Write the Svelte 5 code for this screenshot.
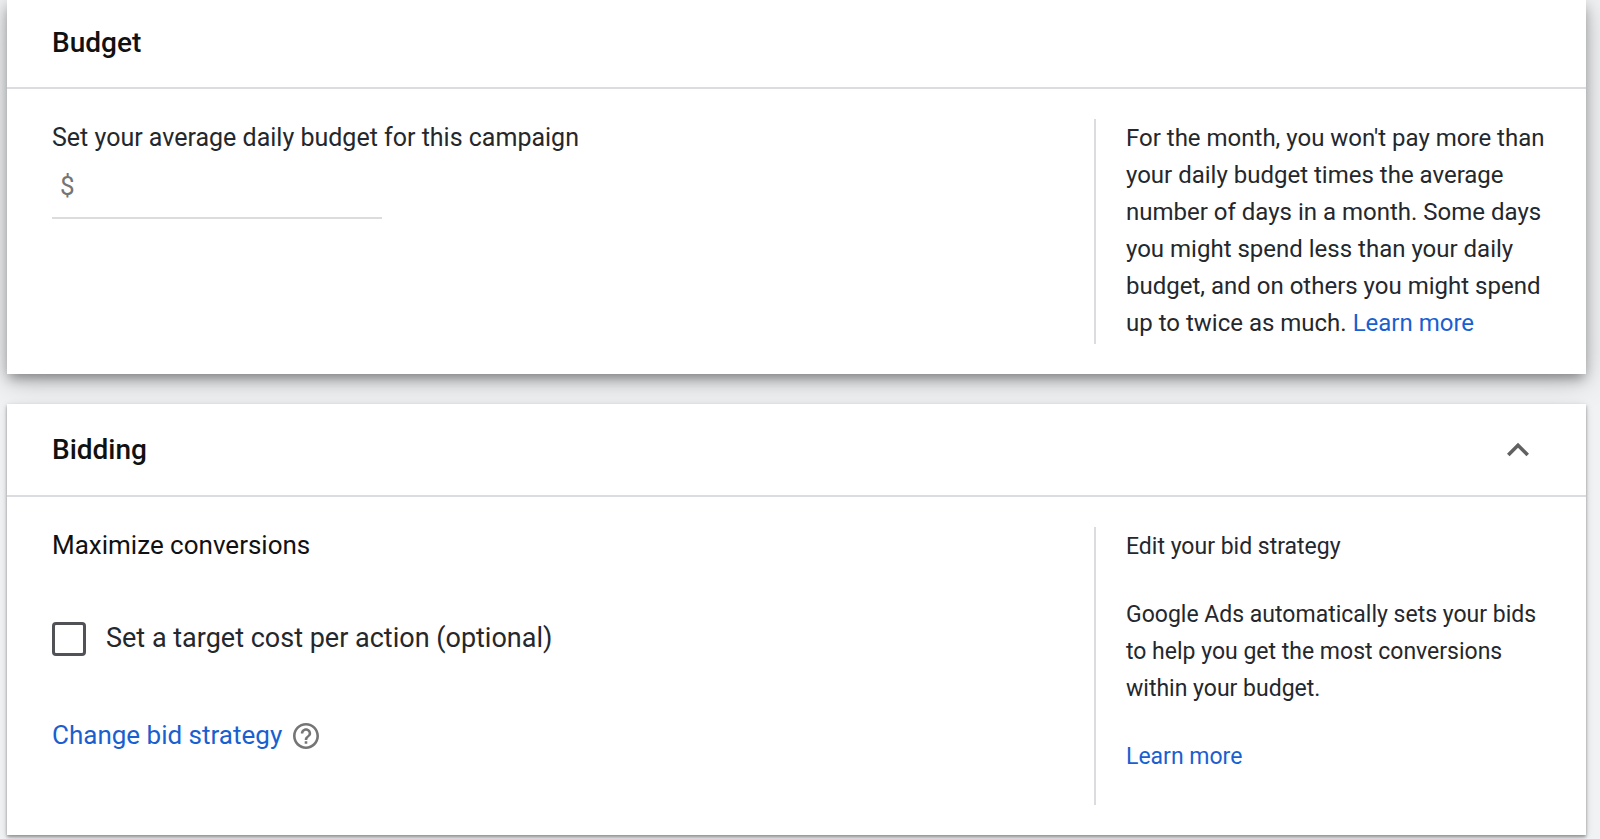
<script lang="ts">
  let budget = $state("");
  let targetCost = $state(false);
  let biddingOpen = $state(true);
</script>

<main>
  <section class="card raised">
    <header class="first">
      <h2>Budget</h2>
    </header>
    <div class="body">
      <div class="settings">
        <label class="budget-label" for="budget">
          Set your average daily budget for this campaign
        </label>
        <div class="money">
          <span>$</span>
          <input id="budget" type="text" inputmode="decimal" bind:value={budget} />
        </div>
      </div>
      <aside class="large">
        <p>
          For the month, you won't pay more than<br />
          your daily budget times the average<br />
          number of days in a month. Some days<br />
          you might spend less than your daily<br />
          budget, and on others you might spend<br />
          up to twice as much. <a href="#budget-help">Learn more</a>
        </p>
      </aside>
    </div>
  </section>

  <section class="card">
    <header>
      <h2>Bidding</h2>
      <button
        class="toggle"
        type="button"
        aria-label="Toggle bidding"
        aria-expanded={biddingOpen}
        onclick={() => (biddingOpen = !biddingOpen)}
      >
        <svg class:closed={!biddingOpen} viewBox="0 0 24 24" aria-hidden="true">
          <path d="M12 8l-6 6 1.41 1.41L12 10.83l4.59 4.58L18 14z" />
        </svg>
      </button>
    </header>
    {#if biddingOpen}
      <div class="body">
        <div class="settings">
          <h3>Maximize conversions</h3>
          <label class="check">
            <input type="checkbox" bind:checked={targetCost} />
            Set a target cost per action (optional)
          </label>
          <div class="change">
            <a href="#bid-strategy">Change bid strategy</a>
            <button class="help" type="button" aria-label="Help">
              <svg viewBox="2 2 20 20" aria-hidden="true">
                <path
                  d="M11 18h2v-2h-2v2zm1-16C6.48 2 2 6.48 2 12s4.48 10 10 10 10-4.48 10-10S17.52 2 12 2zm0 18c-4.41 0-8-3.59-8-8s3.59-8 8-8 8 3.59 8 8-3.59 8-8 8zm0-14c-2.21 0-4 1.79-4 4h2c0-1.1.9-2 2-2s2 .9 2 2c0 2-3 1.75-3 5h2c0-2.25 3-2.5 3-5 0-2.21-1.79-4-4-4z"
                />
              </svg>
            </button>
          </div>
        </div>
        <aside class="tall">
          <p>Edit your bid strategy</p>
          <p>
            Google Ads automatically sets your bids<br />
            to help you get the most conversions<br />
            within your budget.
          </p>
          <p><a href="#bidding-help">Learn more</a></p>
        </aside>
      </div>
    {/if}
  </section>
</main>

<style>
  :global(body) {
    margin: 0;
    background: #f1f2f4;
    color: #24282d;
    font-family: Roboto, Arial, sans-serif;
    line-height: 37px;
  }

  main {
    display: flex;
    flex-direction: column;
    gap: 30px;
    padding: 0 14px 4px 7px;
  }

  .card {
    background: #fff;
    box-shadow:
      0 2px 3px rgba(0, 0, 0, 0.35),
      0 2px 8px rgba(0, 0, 0, 0.14);
  }

  .raised {
    box-shadow:
      0 6px 12px -2px rgba(0, 0, 0, 0.4),
      0 6px 32px rgba(0, 0, 0, 0.2);
  }

  header {
    display: flex;
    align-items: center;
    justify-content: space-between;
    box-sizing: border-box;
    height: 93px;
    padding: 0 46px 0 45px;
    border-bottom: 2px solid #dadce0;
  }

  header.first {
    height: 89px;
    padding-bottom: 2px;
  }

  h2,
  h3,
  p {
    margin: 0;
  }

  h2 {
    color: #111;
    font-size: 28px;
    font-weight: 500;
  }

  h3 {
    color: #111;
    font-size: 26px;
    font-weight: 400;
  }

  a {
    color: #1a5fd0;
    text-decoration: none;
  }

  button {
    display: flex;
    padding: 0;
    border: 0;
    background: none;
    cursor: pointer;
  }

  .toggle svg {
    width: 44px;
    height: 44px;
    fill: #616161;
  }

  .toggle svg.closed {
    transform: rotate(180deg);
  }

  .body {
    display: flex;
    padding: 30px 30px 30px 45px;
  }

  .settings {
    flex: 1;
  }

  .budget-label {
    display: block;
    font-size: 25px;
  }

  .money {
    display: flex;
    align-items: center;
    gap: 8px;
    box-sizing: border-box;
    width: 330px;
    height: 63px;
    padding: 0 8px;
    border-bottom: 2px solid #dcdcdc;
    color: #757575;
    font-size: 26px;
  }

  .money input {
    flex: 1;
    min-width: 0;
    padding: 0;
    border: 0;
    outline: none;
    background: none;
    font: inherit;
  }

  .check {
    display: flex;
    align-items: center;
    gap: 20px;
    margin-top: 56px;
    font-size: 27px;
  }

  .check input {
    appearance: none;
    width: 34px;
    height: 34px;
    margin: 0;
    border: 3px solid #505257;
    border-radius: 4px;
  }

  .check input:checked {
    border-color: #1a5fd0;
    background: #1a5fd0;
  }

  .change {
    display: flex;
    align-items: center;
    gap: 11px;
    margin-top: 60px;
    font-size: 26px;
  }

  .help svg {
    width: 26px;
    height: 26px;
    fill: #757575;
  }

  aside {
    box-sizing: border-box;
    width: 462px;
    padding: 1px 0 2px 30px;
    border-left: 2px solid #dadce0;
    font-size: 23px;
  }

  aside.large {
    font-size: 24px;
  }

  aside.tall {
    padding-bottom: 30px;
  }

  aside p + p {
    margin-top: 31px;
  }
</style>
